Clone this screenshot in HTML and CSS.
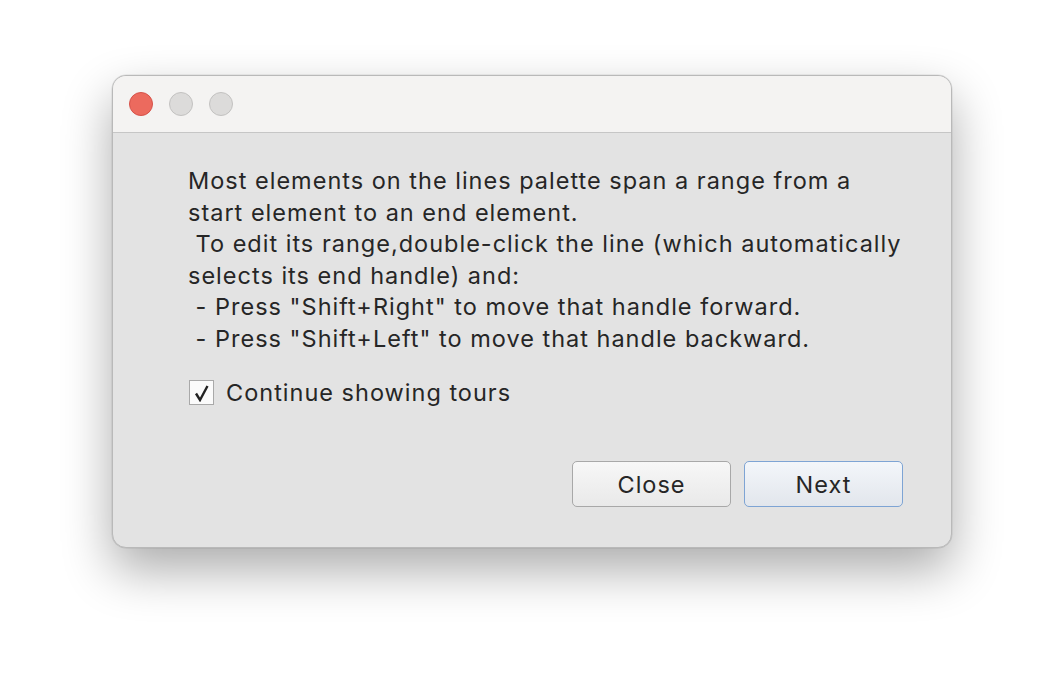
FILE: index.html
```html
<!DOCTYPE html>
<html>
<head>
<meta charset="utf-8">
<link rel="stylesheet" href="styles.css">
</head>
<body>
<div class="stage">
  <div class="window">
    <div class="titlebar">
      <span class="light red"></span>
      <span class="light"></span>
      <span class="light"></span>
    </div>
    <div class="content">
      <div class="message">Most elements on the lines palette span a range from a<br>start element to an end element.<br>&nbsp;To edit its range,double-click the line (which automatically<br>selects its end handle) and:<br>&nbsp;- Press "Shift+Right" to move that handle forward.<br>&nbsp;- Press "Shift+Left" to move that handle backward.</div>
      <label class="check">
        <span class="box">
          <svg width="18" height="18" viewBox="0 0 18 18"><path d="M3 9.5 L7 16 L14.5 2" fill="none" stroke="#222" stroke-width="2.4" stroke-linejoin="miter"/></svg>
        </span>
        <span class="check-label">Continue showing tours</span>
      </label>
      <div class="buttons">
        <button class="btn">Close</button>
        <button class="btn default">Next</button>
      </div>
    </div>
  </div>
</div>
</body>
</html>
```

FILE: styles.css
```css
html, body {
  margin: 0;
  padding: 0;
  background: #ffffff;
  width: 1064px;
  height: 696px;
  overflow: hidden;
}
.stage {
  padding: 75px 0 0 112px;
}
.window {
  width: 840px;
  height: 473px;
  box-sizing: border-box;
  border: 1px solid #b9b9b9;
  border-radius: 14px;
  background: #e3e3e3;
  overflow: hidden;
  box-shadow: 0 22px 50px rgba(0,0,0,0.33), 0 0 0 0.5px rgba(0,0,0,0.1);
  display: flex;
  flex-direction: column;
  font-family: Inter, "Liberation Sans", Arial, sans-serif;
  color: #262626;
  letter-spacing: 1px;
}
.titlebar {
  height: 56px;
  background: #f4f3f2;
  border-bottom: 1px solid #c6c6c6;
  display: flex;
  align-items: center;
  gap: 16px;
  padding-left: 16px;
  flex-shrink: 0;
}
.light {
  width: 22px;
  height: 22px;
  border-radius: 50%;
  background: #dcdbda;
  border: 1px solid #c3c2c1;
}
.light.red {
  background: #ec6a5e;
  border-color: #d6524a;
}
.content {
  padding: 32px 0 0 75px;
  display: flex;
  flex-direction: column;
}
.message {
  font-size: 23.5px;
  line-height: 31.5px;
  white-space: nowrap;
}
.check {
  display: flex;
  align-items: center;
  gap: 12px;
  margin-top: 24px;
  font-size: 23.5px;
}
.box {
  width: 23px;
  height: 23px;
  margin-left: 1px;
  border: 1px solid #a9a9a9;
  background: #fbfbfb;
  display: flex;
  align-items: center;
  justify-content: center;
}
.buttons {
  display: flex;
  gap: 13px;
  margin-top: 54px;
  padding-left: 384px;
}
.btn {
  width: 159px;
  height: 46px;
  border-radius: 5px;
  border: 1px solid #a8a8a8;
  background: linear-gradient(#f7f7f7, #e9e9e9);
  font-family: Inter, "Liberation Sans", Arial, sans-serif;
  font-size: 23.5px;
  letter-spacing: 1px;
  color: #262626;
  padding: 0;
}
.btn.default {
  border-color: #7ea4d4;
  background: linear-gradient(#f3f6fa, #e2e6ec);
}
```
